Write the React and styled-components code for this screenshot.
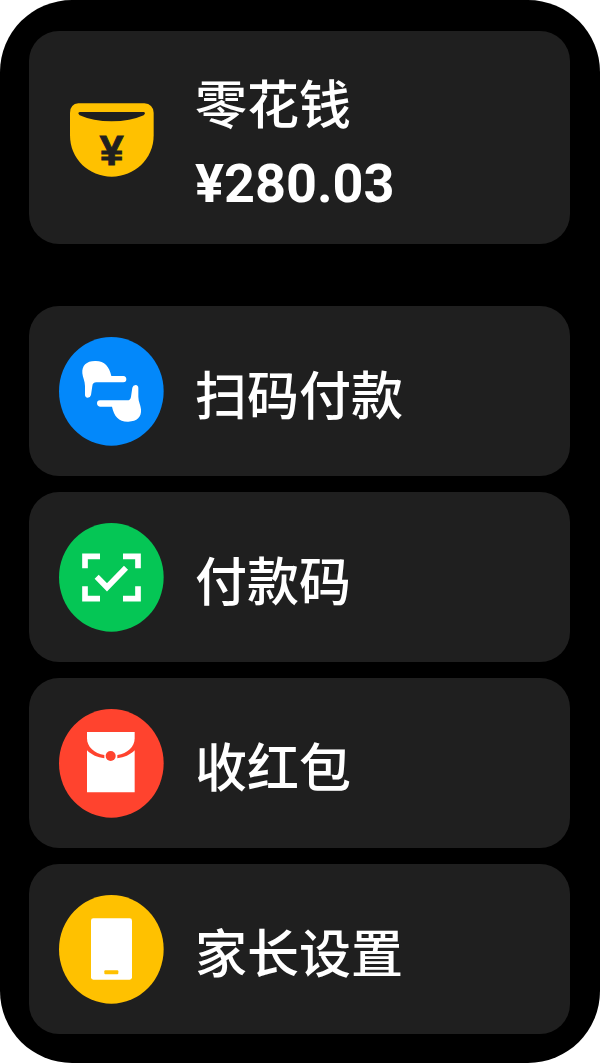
import React from 'react';
import styled, {createGlobalStyle} from 'styled-components';

const GlobalStyle = createGlobalStyle`
	* {
		box-sizing: border-box;
	}
	body {
		margin: 0;
		background-color: #fff;
		font-family: 'Noto Sans CJK SC', sans-serif;
	}
`;

const Screen = styled.main`
	display: flex;
	flex-direction: column;
	gap: 62px;
	padding: 31px 30px 29px 29px;
	border-radius: 72px;
	background-color: #000;
	color: #fff;
`;

const Menu = styled.nav`
	display: flex;
	flex-direction: column;
	gap: 16px;
`;

const Card = styled.button`
	display: flex;
	align-items: center;
	gap: 31px;
	width: 100%;
	height: ${props => props.$tall ? '213px' : '170px'};
	padding: 0 30px;
	border: 0;
	border-radius: 30px;
	background-color: #1f1f1f;
	color: inherit;
	font: inherit;
	text-align: left;
	cursor: pointer;
`;

const IconBox = styled.svg`
	flex: none;
	width: 105px;
	height: 109px;
`;

const Balance = styled.span`
	padding-top: 6px;
`;

const Label = styled.span`
	display: block;
	padding-top: 4px;
	font-size: 52px;
	font-weight: 500;
	line-height: 78px;
`;

const Amount = styled.span`
	display: block;
	padding-top: 4px;
	font-family: Roboto, 'Noto Sans CJK SC', sans-serif;
	font-size: 54px;
	font-weight: 700;
	line-height: 78px;
`;

const PurseIcon = () => (
	<IconBox viewBox="0 0 315 327" aria-hidden="true">
		<path fill="#ffc100" d="M58 61H256Q282 63 284 89V157C284 229 226 281 158 281S33 229 33 157V89Q34 63 58 61Z" />
		<path fill="#1f1f1f" d="M62 87H254Q262 89 254 97Q214 115 158 115T62 97Q54 89 62 87Z" />
		<text x="158" y="245" textAnchor="middle" fontFamily="'Liberation Sans', sans-serif" fontSize="128" fontWeight="700" fill="#1f1f1f" stroke="#1f1f1f" strokeWidth="3">¥</text>
	</IconBox>
);

const ScanIcon = () => (
	<IconBox viewBox="0 0 315 327" preserveAspectRatio="none" aria-hidden="true">
		<ellipse cx="157" cy="163" rx="157" ry="163" fill="#0388fa" />
		<g fill="#fff">
			<path id="hand" d="M70 109C68 86 82 72 108 72C136 71 151 88 157 117H193Q202 118 202 127T193 136H112Q101 136 100 147L96 174Q94 182 86 182Q78 181 78 173V147C78 132 71 122 70 109Z" />
			<use href="#hand" transform="rotate(180 158 163)" />
		</g>
	</IconBox>
);

const PayCodeIcon = () => (
	<IconBox viewBox="0 0 315 327" preserveAspectRatio="none" aria-hidden="true">
		<ellipse cx="157" cy="163" rx="157" ry="163" fill="#05c655" />
		<g fill="none" stroke="#fff" strokeWidth="17">
			<path d="M78 136V100H123M192 100H237V136M237 190V227H192M123 227H78V190" />
			<path d="M113 161L144 193L201 134" />
		</g>
	</IconBox>
);

const RedPacketIcon = () => (
	<IconBox viewBox="0 0 315 327" preserveAspectRatio="none" aria-hidden="true">
		<ellipse cx="157" cy="163" rx="157" ry="163" fill="#ff432e" />
		<g fill="#fff">
			<path d="M84 69H227V88C227 114 205 134 175 138H136C106 134 84 114 84 88Z" />
			<path d="M84 124C98 138 115 145 136 148H175C196 145 213 138 227 124V250H84Z" />
			<path d="M136 132H175V152H136Z" />
		</g>
		<circle cx="155" cy="141" r="15" fill="#ff432e" />
	</IconBox>
);

const PhoneIcon = () => (
	<IconBox viewBox="0 0 315 327" preserveAspectRatio="none" aria-hidden="true">
		<ellipse cx="157" cy="163" rx="157" ry="163" fill="#ffc100" />
		<rect x="96" y="70" width="123" height="184" rx="7" fill="#fff" />
		<rect x="136" y="226" width="42" height="12" rx="3" fill="#ffc100" />
	</IconBox>
);

const menuItems = [
	{id: 'scan', label: '扫码付款', Icon: ScanIcon},
	{id: 'code', label: '付款码', Icon: PayCodeIcon},
	{id: 'packet', label: '收红包', Icon: RedPacketIcon},
	{id: 'parent', label: '家长设置', Icon: PhoneIcon},
];

const App = () => (
	<>
		<GlobalStyle />
		<Screen lang="zh-CN">
			<Card type="button" $tall>
				<PurseIcon />
				<Balance>
					<Label>零花钱</Label>
					<Amount>¥280.03</Amount>
				</Balance>
			</Card>
			<Menu>
				{menuItems.map(({id, label, Icon}) =>
					<Card type="button" key={id}>
						<Icon />
						<Label>{label}</Label>
					</Card>
				)}
			</Menu>
		</Screen>
	</>
);

export default App;
